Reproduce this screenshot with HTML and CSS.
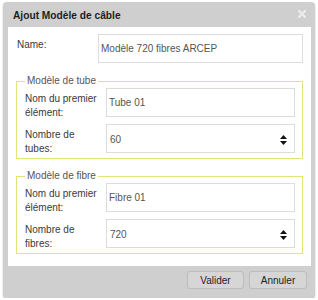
FILE: index.html
```html
<!DOCTYPE html>
<html lang="fr">
<head>
    <meta charset="UTF-8">
    <meta name="viewport" content="width=device-width, initial-scale=1.0">
    <title>Ajout Modèle de câble</title>
    <link rel="stylesheet" href="styles.css">
</head>
<body>
    <div class="dialog">
        <div class="titlebar">
            <span class="title">Ajout Modèle de câble</span>
            <svg class="close" width="8" height="8" viewBox="0 0 8 8">
                <path d="M1 1 L7 7 M7 1 L1 7" stroke="#ececec" stroke-width="2.2" stroke-linecap="square"/>
            </svg>
        </div>

        <div class="body">
            <div class="row">
                <label>Name:</label>
                <input type="text" class="field" value="Modèle 720 fibres ARCEP">
            </div>

            <!-- modèle de tube -->
            <fieldset>
                <legend>Modèle de tube</legend>
                <div class="row">
                    <label>Nom du premier élément:</label>
                    <input type="text" class="field" value="Tube 01">
                </div>
                <div class="row">
                    <label>Nombre de tubes:</label>
                    <div class="field select">
                        <span>60</span>
                        <svg width="7" height="10" viewBox="0 0 7 10">
                            <path d="M3.5 0 L7 4 L0 4 Z M3.5 10 L7 6 L0 6 Z" fill="#111"/>
                        </svg>
                    </div>
                </div>
            </fieldset>

            <!-- modèle de fibre -->
            <fieldset class="second">
                <legend>Modèle de fibre</legend>
                <div class="row">
                    <label>Nom du premier élément:</label>
                    <input type="text" class="field" value="Fibre 01">
                </div>
                <div class="row">
                    <label>Nombre de fibres:</label>
                    <div class="field select">
                        <span>720</span>
                        <svg width="7" height="10" viewBox="0 0 7 10">
                            <path d="M3.5 0 L7 4 L0 4 Z M3.5 10 L7 6 L0 6 Z" fill="#111"/>
                        </svg>
                    </div>
                </div>
            </fieldset>
        </div>

        <div class="footer">
            <button>Valider</button>
            <button>Annuler</button>
        </div>
    </div>
</body>
</html>
```

FILE: styles.css
```css
body {
    margin: 0;
    background: #fff;
    font-family: "Liberation Sans", Arial, sans-serif;
    font-size: 10px;
    color: #3a3a3a;
}
.dialog {
    margin: 2px 0 0 3px;
    width: 312px;
    height: 296px;
    box-sizing: border-box;
    padding: 0 4px 0 5px;
    background-color: #cfcfcf;
    border-radius: 4px;
    box-shadow: 0 1px 2px rgba(0, 0, 0, 0.25);
    display: flex;
    flex-direction: column;
}
.titlebar {
    height: 25px;
    display: flex;
    align-items: center;
    justify-content: space-between;
    padding: 1px 5px 0 5px;
    box-sizing: border-box;
}
.title {
    font-weight: bold;
    font-size: 10.2px;
    color: #1e1e1e;
}
.close {
    margin-top: -3px;
}
.body {
    background: #fff;
    height: 239px;
    box-sizing: border-box;
    padding: 7px 8px 0 9px;
}
.row {
    display: grid;
    grid-template-columns: 81px 1fr;
    line-height: 13.5px;
}
.row + .row {
    margin-top: 5px;
}
.row label {
    padding: 4px 6px 0 0;
    color: #3a3a3a;
}
.field {
    height: 29px;
    box-sizing: border-box;
    border: 1px solid #dcdcdc;
    background: #fff;
    padding: 0 2px;
    font-family: "Liberation Sans", Arial, sans-serif;
    font-size: 10px;
    color: #555;
    outline: none;
    margin: 0;
    width: 100%;
}
.select {
    display: flex;
    align-items: center;
    justify-content: space-between;
    padding: 2px 7px 0 3px;
}
fieldset {
    margin: 12px 0 0 -1px;
    padding: 1px 7px 3px 8px;
    border: 1px solid #e2e47a;
    min-width: 0;
}
fieldset.second {
    margin-top: 11px;
}
legend {
    padding: 0 2px;
    line-height: 12px;
    color: #555;
}
.footer {
    display: flex;
    justify-content: flex-end;
    gap: 5px;
    padding: 5px 4px 0 0;
}
button {
    height: 18px;
    padding: 0;
    border: 1px solid #bcbcbc;
    border-radius: 3px;
    background: #d6d6d6;
    font-family: "Liberation Sans", Arial, sans-serif;
    font-size: 10px;
    color: #222;
    width: 57px;
}
button + button {
    width: 58px;
}
```
